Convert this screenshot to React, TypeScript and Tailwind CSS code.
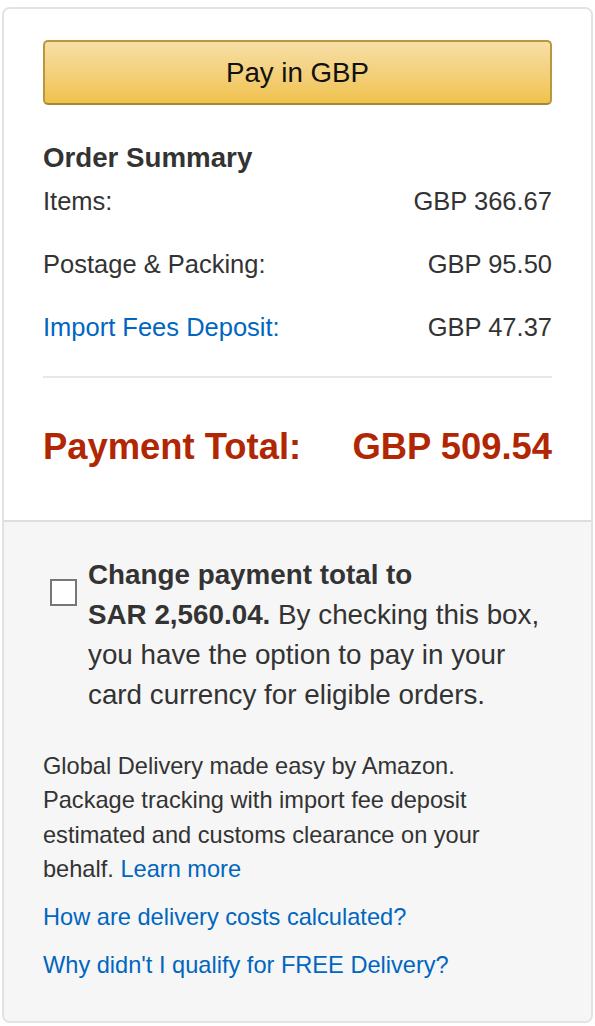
const rows = [
  { label: 'Items:', value: 'GBP 366.67', link: false },
  { label: 'Postage & Packing:', value: 'GBP 95.50', link: false },
  { label: 'Import Fees Deposit:', value: 'GBP 47.37', link: true },
];

function App() {
  return (
    <div
      className="min-h-[1026px] bg-white pt-[7px] pl-[2px] pr-[2px] text-[#333]"
      style={{ fontFamily: '"Liberation Sans", Arial, sans-serif' }}
    >
      <div className="w-[591px] overflow-hidden rounded-[8px] border-2 border-[#e2e2e2]">
        {/* Order summary */}
        <div className="bg-white px-[39px] pt-[31px] pb-[51px]">
          <button className="flex h-[65px] w-full items-center justify-center rounded-[5px] border-2 border-[#b8973f] border-b-[#a88734] bg-gradient-to-b from-[#f7dfa5] to-[#f0c14b] text-[27.7px] text-[#111]">
            Pay in GBP
          </button>

          <h3 className="mt-[35px] text-[27.7px] font-bold leading-[36px]">Order Summary</h3>

          <div className="mt-[7px] flex flex-col gap-[27px]">
            {rows.map(row => (
              <div key={row.label} className="flex items-center justify-between text-[25.5px] leading-[36px]">
                <span className={row.link ? 'text-[#0066c0]' : ''}>{row.label}</span>
                <span>{row.value}</span>
              </div>
            ))}
          </div>

          <div className="mt-[31px] h-[2px] bg-[#e7e7e7]" />

          <div className="mt-[47px] flex items-center justify-between text-[36.4px] font-bold leading-[44px] text-[#b12704]">
            <span>Payment Total:</span>
            <span>GBP 509.54</span>
          </div>
        </div>

        {/* Currency converter + delivery info */}
        <div className="border-t-2 border-[#dedede] bg-[#f6f6f6] px-[39px] pt-[33px] pb-[39px]">
          <label className="flex items-start">
            <span className="mt-[24px] ml-[7px] h-[27px] w-[27px] shrink-0 border-2 border-[#777] bg-white" />
            <span className="ml-[11px] text-[27.8px] leading-[40px]">
              <b>Change payment total to </b>
              <b className="whitespace-nowrap">SAR 2,560.04.</b> By checking this box, you have the option to pay in your card currency for eligible orders.
            </span>
          </label>

          <p className="mt-[34px] text-[23.6px] leading-[34.3px]">
            Global Delivery made easy by Amazon.
            <br />
            Package tracking with import fee deposit estimated and customs clearance on your behalf.{' '}
            <a className="text-[#0066c0]">Learn more</a>
          </p>

          <div className="mt-[14px] flex flex-col gap-[14px] text-[23.6px] leading-[34px] text-[#0066c0]">
            <a>How are delivery costs calculated?</a>
            <a>Why didn't I qualify for FREE Delivery?</a>
          </div>
        </div>
      </div>
    </div>
  );
}

export default App;
